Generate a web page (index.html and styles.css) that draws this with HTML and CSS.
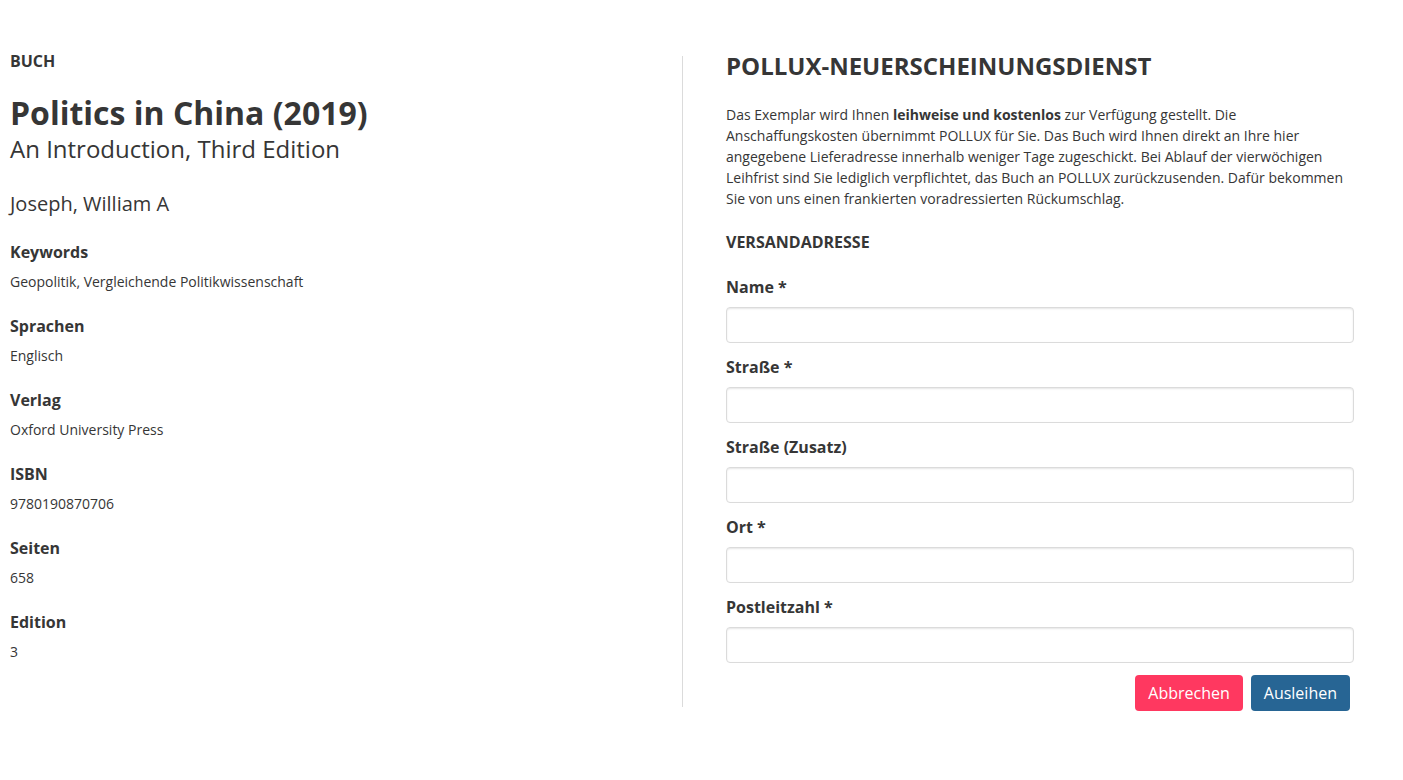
FILE: index.html
```html
<!DOCTYPE html>
<html lang="de">
<head>
<meta charset="utf-8">
<title>Politics in China (2019)</title>
<link rel="stylesheet" href="styles.css">
</head>
<body>
<div class="layout">
  <section class="book">
    <div class="kind">BUCH</div>
    <h1 class="title">Politics in China (2019)</h1>
    <h2 class="subtitle">An Introduction, Third Edition</h2>
    <div class="author">Joseph, William A</div>
    <dl class="meta">
      <dt>Keywords</dt><dd>Geopolitik, Vergleichende Politikwissenschaft</dd>
      <dt>Sprachen</dt><dd>Englisch</dd>
      <dt>Verlag</dt><dd>Oxford University Press</dd>
      <dt>ISBN</dt><dd>9780190870706</dd>
      <dt>Seiten</dt><dd>658</dd>
      <dt>Edition</dt><dd>3</dd>
    </dl>
  </section>
  <section class="order">
    <h2 class="order-title">POLLUX-NEUERSCHEINUNGSDIENST</h2>
    <p class="intro">Das Exemplar wird Ihnen <strong>leihweise und kostenlos</strong> zur Verfügung gestellt. Die Anschaffungskosten übernimmt POLLUX für Sie. Das Buch wird Ihnen direkt an Ihre hier angegebene Lieferadresse innerhalb weniger Tage zugeschickt. Bei Ablauf der vierwöchigen Leihfrist sind Sie lediglich verpflichtet, das Buch an POLLUX zurückzusenden. Dafür bekommen Sie von uns einen frankierten voradressierten Rückumschlag.</p>
    <h3 class="section-title">VERSANDADRESSE</h3>
    <form class="form">
      <label class="field"><span class="label">Name *</span><input class="input" type="text"></label>
      <label class="field"><span class="label">Straße *</span><input class="input" type="text"></label>
      <label class="field"><span class="label">Straße (Zusatz)</span><input class="input" type="text"></label>
      <label class="field"><span class="label">Ort *</span><input class="input" type="text"></label>
      <label class="field"><span class="label">Postleitzahl *</span><input class="input" type="text"></label>
      <div class="actions">
        <button type="button" class="btn btn-danger">Abbrechen</button>
        <button type="button" class="btn btn-primary">Ausleihen</button>
      </div>
    </form>
  </section>
</div>
</body>
</html>
```
FILE: styles.css
```css
* { box-sizing: border-box; }
html, body { margin: 0; padding: 0; background: #fff; }
body {
  font-family: "Open Sans", "Noto Sans", sans-serif;
  color: #363636;
  font-size: 14px;
}
.layout {
  display: flex;
  padding-top: 56px;
  padding-bottom: 69px;
}
.book {
  width: 683px;
  padding-left: 10px;
  border-right: 1px solid #dbdbdb;
}
.kind {
  font-size: 16px;
  font-weight: 700;
  line-height: 24px;
  margin-top: -7px;
}
.title {
  font-size: 32px;
  font-weight: 700;
  line-height: 40px;
  margin: 20px 0 0;
}
.subtitle {
  font-size: 24px;
  font-weight: 400;
  line-height: 32px;
  margin: 0;
}
.author {
  font-size: 20px;
  line-height: 28px;
  margin-top: 25px;
}
.meta { margin: 22px 0 0; }
.meta dt {
  font-size: 16px;
  font-weight: 700;
  line-height: 24px;
}
.meta dd {
  margin: 8px 0 22px;
  line-height: 20px;
}
.order {
  flex: 1;
  padding: 0 49px 0 43px;
}
.order-title {
  font-size: 24px;
  font-weight: 700;
  line-height: 32px;
  margin: -6px 0 0;
}
.intro {
  line-height: 21px;
  margin: 22px 0 0;
}
.section-title {
  font-size: 16px;
  font-weight: 700;
  line-height: 24px;
  margin: 21px 0 0;
}
.form { display: flex; flex-direction: column; margin-top: 21px; }
.field { display: flex; flex-direction: column; margin-bottom: 12px; }
.label {
  font-size: 16px;
  font-weight: 700;
  line-height: 24px;
  margin-bottom: 8px;
}
.input {
  height: 36px;
  border: 1px solid #dbdbdb;
  border-radius: 4px;
  box-shadow: inset 0 1px 2px rgba(10,10,10,.1);
  font: inherit;
  padding: 0 10px;
}
.actions {
  display: flex;
  justify-content: flex-end;
  gap: 8px;
  padding-right: 4px;
  margin-bottom: -4px;
}
.btn {
  height: 36px;
  border: none;
  border-radius: 4px;
  font-family: inherit;
  font-size: 16px;
  color: #fff;
  padding: 0 13px;
  cursor: pointer;
}
.btn-danger { background: #ff3860; }
.btn-primary { background: #276594; }
```
